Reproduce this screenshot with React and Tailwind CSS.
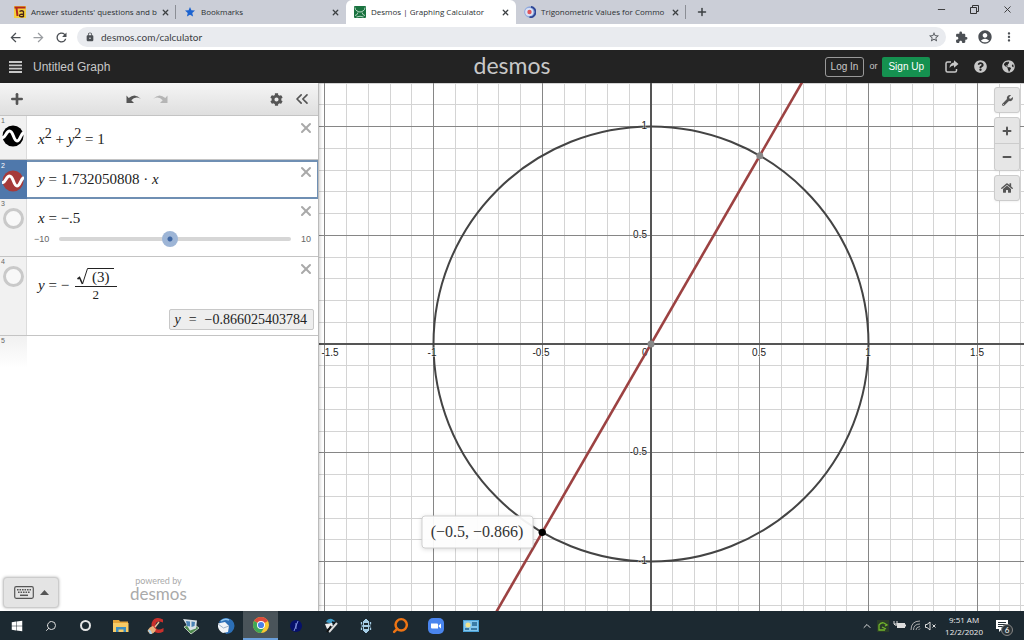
import React, { useState } from 'react';
import { MdAccountCircle, MdArrowBack, MdArrowForward, MdExtension, MdLock, MdMoreVert, MdRefresh, MdStar, MdStarBorder } from 'react-icons/md';
import { FaCog, FaGlobeAmericas, FaHome, FaQuestionCircle, FaWindows, FaWrench } from 'react-icons/fa';
import { ChevronUp, ChevronsLeft, Minus, Plus, Search, X } from 'lucide-react';

/* ─── Browser chrome ─────────────────────────────────────────── */

const TutorIcon = () => (
    <svg viewBox="0 0 12 12" className="size-3">
        <rect width="12" height="12" fill="#f3cf3f" />
        <path d="M.5 1.500h11M2.500 2l1 8" stroke="#b3261e" strokeWidth="2" />
        <path d="M5.500 5.500q2.500-1.500 4 0V10.500q-4 .8-4-1t4-1" fill="none" stroke="#4a2418" strokeWidth="1.300" />
    </svg>
);

const DesmosIcon = () => (
    <svg viewBox="0 0 12 12" className="size-3">
        <rect width="12" height="12" rx="1" fill="#1a7340" />
        <path d="M1 1.500q0 2.500 2 3.500t3 1 3-1 2-3.500M1 9.500q2 0 3-3M8 6.500q1 3 3 3M2.500 11q3.500-1.500 7 0" fill="none" stroke="#d9eee1" strokeWidth=".8" />
    </svg>
);

const TrigIcon = () => (
    <svg viewBox="0 0 12 12" className="size-3">
        <circle cx="6" cy="6" r="5.800" fill="#8fa8dd" />
        <circle cx="5.200" cy="6" r="4" fill="#dbe3f6" />
        <path d="M7 .8a5.200 5.200 0 0 1-1.500 10.400" fill="none" stroke="#2f4796" strokeWidth="1.800" />
        <circle cx="5.500" cy="6" r="2.200" fill="#e0565b" />
    </svg>
);

const TABS = [
    { id: 'answers', title: "Answer students' questions and b", icon: <TutorIcon /> },
    { id: 'bookmarks', title: 'Bookmarks', icon: <MdStar className="size-3 text-[#1a62d0]" /> },
    { id: 'desmos', title: 'Desmos | Graphing Calculator', icon: <DesmosIcon /> },
    { id: 'trig', title: 'Trigonometric Values for Commo', icon: <TrigIcon /> },
];

const TabStrip = () => {
    const [active, setActive] = useState('desmos');
    return (
        <div className="flex h-6 items-stretch bg-[#cbced7] pl-[6px]">
            {TABS.map((tab) => (
                <div
                    key={tab.id}
                    className={`flex w-[170px] items-center pr-[6px] pl-2 ${active === tab.id ? 'rounded-t-md bg-white' : ''} ${tab.id === 'answers' || tab.id === 'trig' ? 'relative after:absolute after:right-0 after:h-[14px] after:w-px after:bg-[#8b8e95]' : ''}`}
                >
                    <button onClick={() => setActive(tab.id)} className="flex min-w-0 flex-1 items-center gap-[5px] text-left">
                        <span className="shrink-0">{tab.icon}</span>
                        <span className="font-['Open_Sans',sans-serif] text-[8px] whitespace-nowrap text-[#2c3033]">{tab.title}</span>
                    </button>
                    <button aria-label={`Close ${tab.title}`} className="shrink-0">
                        <X className="size-[9px] text-[#3c4043]" strokeWidth={3.5} />
                    </button>
                </div>
            ))}
            <button aria-label="New tab" className="ml-[10px]">
                <Plus className="size-3 text-[#3c4043]" strokeWidth={3} />
            </button>
            <div className="ml-auto flex items-start gap-[22px] pt-1 pr-[11px] text-[#333]">
                <button aria-label="Minimize"><Minus className="size-[11px]" /></button>
                <button aria-label="Restore">
                    <svg viewBox="0 0 11 11" className="size-[11px]" fill="none" stroke="currentColor">
                        <path d="M1.500 3.500h6v6h-6zM3.500 3V1.500h6v6H8" />
                    </svg>
                </button>
                <button aria-label="Close"><X className="size-[11px]" /></button>
            </div>
        </div>
    );
};

const AddressBar = () => (
    <div className="flex h-[26px] items-center bg-white pr-2 pl-2 text-[#4b4f54]">
        <div className="flex items-center gap-2">
            <button aria-label="Back"><MdArrowBack className="size-[15px]" /></button>
            <button aria-label="Forward"><MdArrowForward className="size-[15px] text-[#9a9da1]" /></button>
            <button aria-label="Reload"><MdRefresh className="size-[15px]" /></button>
        </div>
        <div className="ml-2 flex h-5 flex-1 items-center rounded-full bg-[#e9ebef] pr-[6px] pl-2">
            <MdLock className="size-[10px]" />
            <input
                aria-label="Address"
                defaultValue="desmos.com/calculator"
                className="ml-[6px] flex-1 bg-transparent text-[10px] text-[#3c4043] outline-none"
            />
            <button aria-label="Bookmark this page"><MdStarBorder className="size-3" /></button>
        </div>
        <div className="ml-[9px] flex items-center gap-[9px]">
            <button aria-label="Extensions"><MdExtension className="size-[13px]" /></button>
            <button aria-label="Profile"><MdAccountCircle className="size-4" /></button>
            <button aria-label="Menu"><MdMoreVert className="size-[14px]" /></button>
        </div>
    </div>
);

/* ─── Desmos header ──────────────────────────────────────────── */

const Header = () => (
    <header className="grid h-[33px] grid-cols-[1fr_auto_1fr] items-center bg-[#232323] px-[9px] font-['Liberation_Sans',sans-serif] text-[#c8c8c8]">
        <div className="flex items-center gap-[11px]">
            <button aria-label="Open menu">
                <svg viewBox="0 0 13 12" className="h-3 w-[13px]" stroke="currentColor" strokeWidth="1.800">
                    <path d="M0 1h13M0 4.300h13M0 7.600h13M0 11h13" />
                </svg>
            </button>
            <button className="text-xs">Untitled Graph</button>
        </div>
        <span className="pb-[3px] font-['Lato',sans-serif] text-[23px] leading-6">desmos</span>
        <div className="flex items-center justify-end text-[10px]">
            <button className="h-5 rounded-[3px] border border-[#999] px-[5px]">Log In</button>
            <span className="mx-[5px] text-[9px]">or</span>
            <button className="h-5 rounded-[2px] bg-[#159150] px-[6px] text-white">Sign Up</button>
            <div className="ml-[15px] flex items-center gap-[15px]">
                <button aria-label="Share graph">
                    <svg viewBox="0 0 14 13" className="h-[13px] w-[14px]" fill="none" stroke="currentColor" strokeWidth="1.500">
                        <path d="M6 2H2.500Q1 2 1 3.500v7Q1 12 2.500 12h7.500q1.500 0 1.500-1.500V9" />
                        <path d="M9 .3 13.500 4 9 7.700V5.500Q6 5.200 4.500 8 4.700 3 9 2.500z" fill="currentColor" stroke="none" />
                    </svg>
                </button>
                <button aria-label="Help"><FaQuestionCircle className="size-[13px]" /></button>
                <button aria-label="Language"><FaGlobeAmericas className="size-[13px]" /></button>
            </div>
        </div>
    </header>
);

/* ─── Expression list ────────────────────────────────────────── */

const CurveIcon = ({ color }) => (
    <svg viewBox="0 0 22 22" className="size-[22px]">
        <circle cx="11" cy="11" r="10.500" fill={color} />
        <path d="M1 12.500C3.500 12 4.500 6 7.500 6c4 0 4 10 7.500 10 3 0 3.500-6 6-8" fill="none" stroke="#fff" strokeWidth="3" strokeLinecap="round" />
    </svg>
);

const EmptyIcon = () => <span className="block size-[21px] rounded-full border-[3px] border-[#c9c9c9] bg-[#f8f8f8]" />;

const ExpressionRow = ({ index, icon, selected, className, children }) => (
    <li className={`relative flex ${selected ? '' : 'border-b border-[#c4c4c4]'} ${className}`}>
        <div className={`flex w-[27px] shrink-0 flex-col border-r ${selected ? 'border-[#4f78ab] bg-[#4f78ab] pt-px text-white' : 'border-[#dcdcdc] bg-[#f1f1f1] text-[#666]'}`}>
            <span className="pl-px font-['Liberation_Sans',sans-serif] text-[7px] leading-[9px]">{index}</span>
            <button aria-label={`Toggle expression ${index}`} className="mx-auto">{icon}</button>
        </div>
        <div className={`relative flex-1 ${selected ? 'border-y-2 border-r border-[#6f8fb3]' : ''}`}>{children}</div>
        <button aria-label={`Delete expression ${index}`} className="absolute top-1 right-1">
            <X className="size-4 text-[#a9a9a9]" strokeWidth={3} />
        </button>
    </li>
);

const Sup = ({ children }) => <sup className="-top-[6px] text-sm leading-none">{children}</sup>;

const ExpressionList = () => {
    const [x, setX] = useState(-0.5);
    return (
        <ol className="font-['Liberation_Serif',serif] text-[15px] text-[#222]">
            <ExpressionRow index={1} className="h-11" icon={<CurveIcon color="#000" />}>
                <div className="pt-3 pl-[11px]">
                    <i>x</i><Sup>2</Sup> + <i>y</i><Sup>2</Sup> = 1
                </div>
            </ExpressionRow>
            <ExpressionRow index={2} selected className="h-[39px]" icon={<CurveIcon color="#a63a3a" />}>
                <div className="pt-[6px] pl-[11px]">
                    <i>y</i> = 1.732050808 · <i>x</i>
                </div>
            </ExpressionRow>
            <ExpressionRow index={3} className="h-[58px]" icon={<EmptyIcon />}>
                <div className="pt-2 pl-[11px]">
                    <i>x</i> = −.5
                </div>
                <label className="flex items-center px-[7px] pt-[3px] font-['Liberation_Sans',sans-serif] text-[9px] text-[#666]">
                    <span className="w-[25px]">−10</span>
                    <input
                        type="range"
                        aria-label="x"
                        min="-10"
                        max="10"
                        step="0.1"
                        value={x}
                        onChange={(e) => setX(Number(e.target.value))}
                        className="h-1 min-w-0 flex-1 appearance-none rounded-full bg-[#d6d6d6] [&::-webkit-slider-thumb]:size-4 [&::-webkit-slider-thumb]:appearance-none [&::-webkit-slider-thumb]:rounded-full [&::-webkit-slider-thumb]:bg-[radial-gradient(circle,#3f67a3_2px,#9db5d6_3px)]"
                    />
                    <span className="w-5 text-right">10</span>
                </label>
            </ExpressionRow>
            <ExpressionRow index={4} className="h-[79px]" icon={<EmptyIcon />}>
                <div className="flex items-center gap-[6px] pt-[11px] pl-[11px]">
                    <span><i>y</i> = −</span>
                    <span className="flex flex-col items-center text-[13px] leading-4">
                        <span className="flex items-stretch border-b border-[#222] pr-[3px] pb-px pl-[2px]">
                            <svg viewBox="0 0 11 17" className="h-[17px] w-[11px]" fill="none" stroke="#222">
                                <path d="M.5 11 2.500 9.500l3 6.500" strokeWidth="1.600" />
                                <path d="M5.500 16 10.500.5h1" />
                            </svg>
                            <span className="border-t border-[#222] px-1 text-[15px] leading-4">(3)</span>
                        </span>
                        <span>2</span>
                    </span>
                </div>
                <output className="absolute right-1 bottom-[5px] flex h-[21px] items-center gap-2 rounded-[2px] border border-[#c8c8c8] bg-[#eee] pr-[6px] pl-1 text-sm">
                    <i>y</i><span>=</span><span>−0.866025403784</span>
                </output>
            </ExpressionRow>
            <li className="flex h-8">
                <div className="w-[27px] bg-linear-to-b from-[#f1f1f1] to-white pl-px font-['Liberation_Sans',sans-serif] text-[7px] text-[#666]">5</div>
            </li>
        </ol>
    );
};

const Sidebar = () => (
    <aside className="z-10 flex w-[319px] shrink-0 flex-col border-r border-[#bbb] bg-white shadow-[1px_0_3px_rgba(0,0,0,0.2)]">
        <div className="flex h-[33px] items-center border-b border-[#c4c4c4] bg-linear-to-b from-[#f5f5f5] to-[#dfdfdf] pr-[6px] pl-[9px] text-[#555]">
            <button aria-label="Add item"><Plus className="size-4" strokeWidth={4} /></button>
            <div className="ml-[101px] flex gap-3">
                <button aria-label="Undo">
                    <svg viewBox="0 0 15 11" className="h-[11px] w-[15px]" fill="currentColor">
                        <path d="M.5 1.500 2.700 4Q9-1.500 15 5 9.500 1.500 5.300 6.200L8 9H.5z" />
                    </svg>
                </button>
                <button aria-label="Redo" className="text-[#b5b5b5]">
                    <svg viewBox="0 0 15 11" className="h-[11px] w-[15px]" fill="currentColor">
                        <path d="M14.500 1.500 12.300 4Q6-1.500 0 5 5.500 1.500 9.700 6.200L7 9h7.500z" />
                    </svg>
                </button>
            </div>
            <button aria-label="Edit list" className="ml-auto"><FaCog className="size-[13px]" /></button>
            <button aria-label="Hide list" className="ml-[9px]"><ChevronsLeft className="size-5" /></button>
        </div>
        <ExpressionList />
        <div className="mt-auto flex items-end pb-[3px] pl-[3px]">
            <button aria-label="Show keypad" className="flex h-[31px] w-14 items-center justify-center gap-[6px] rounded-[4px] border border-[#ccc] bg-[#e4e4e4] text-[#555] shadow-[0_0_3px_rgba(0,0,0,0.3)]">
                <svg viewBox="0 0 20 13" className="h-[13px] w-5" fill="none" stroke="currentColor">
                    <rect x=".7" y=".7" width="18.600" height="11.600" rx="1.500" strokeWidth="1.200" />
                    <path d="M3 3.800h14M4 6.300h12" strokeWidth="1.500" strokeDasharray="1.600 .9" />
                    <path d="M6 9.300h8" strokeWidth="1.500" />
                </svg>
                <svg viewBox="0 0 9 5" className="h-[5px] w-[9px]" fill="currentColor"><path d="M0 5 4.500 0 9 5z" /></svg>
            </button>
            <a href="#desmos" className="ml-[71px] flex flex-col items-center pb-[6px] text-[#aaa]">
                <span className="text-[9px] leading-[9px]">powered by</span>
                <span className="text-[17px] leading-[17px]">desmos</span>
            </a>
        </div>
    </aside>
);

/* ─── Graph paper ────────────────────────────────────────────── */

const ORIGIN = { x: 332, y: 261 };
const UNIT = 217.5;
const px = (v) => Math.floor(ORIGIN.x + v * UNIT);
const py = (v) => Math.floor(ORIGIN.y - v * UNIT);
const STEPS = Array.from({ length: 41 }, (_, i) => i - 20);
const X_LABELS = [-1.5, -1, -0.5, 0.5, 1, 1.5];
const Y_LABELS = [1, 0.5, -0.5, -1];

const gridColor = (i) => (i % 5 === 0 ? '#868686' : '#d4d4d4');

const GraphPaper = () => (
    <main className="relative min-w-0 flex-1 overflow-hidden bg-white">
        <svg viewBox="0 0 705 528" preserveAspectRatio="xMidYMid slice" className="absolute inset-0 size-full">
            {[...STEPS].sort((a, b) => (a % 5 === 0) - (b % 5 === 0)).map((i) => (
                <g key={i} stroke={gridColor(i)}>
                    <line x1={px(i / 10) + 0.5} x2={px(i / 10) + 0.5} y1="0" y2="528" />
                    <line x1="0" x2="705" y1={py(i / 10) + 0.5} y2={py(i / 10) + 0.5} />
                </g>
            ))}
            <path d={`M0 ${ORIGIN.y}H705M${ORIGIN.x} 0V528`} stroke="#555" strokeWidth="2" />
            <circle cx={ORIGIN.x} cy={ORIGIN.y} r={UNIT} fill="none" stroke="#444" strokeWidth="2" />
            <g fontFamily="Liberation Sans, sans-serif" fontSize="10" fill="#222" stroke="#fff" strokeWidth="1" strokeOpacity=".7" paintOrder="stroke">
                {X_LABELS.map((v) => (
                    <text key={v} x={Math.max(px(v) - (v < 0 ? 1 : 0), 11)} y={ORIGIN.y + 12} textAnchor="middle">{v}</text>
                ))}
                <text x={ORIGIN.x - 9} y={ORIGIN.y + 12}>0</text>
                {Y_LABELS.map((v) => (
                    <text key={v} x={ORIGIN.x - 4} y={py(v) + 3} textAnchor="end">{v}</text>
                ))}
            </g>
            <line
                x1={ORIGIN.x - 1.3 * UNIT}
                y1={ORIGIN.y + 1.3 * Math.sqrt(3) * UNIT}
                x2={ORIGIN.x + 1.3 * UNIT}
                y2={ORIGIN.y - 1.3 * Math.sqrt(3) * UNIT}
                stroke="#9c4242"
                strokeWidth="2.6"
            />
            <circle cx={ORIGIN.x} cy={ORIGIN.y} r="3.5" fill="#888" />
            <circle cx={ORIGIN.x + 0.5 * UNIT} cy={ORIGIN.y - 0.866 * UNIT} r="3.5" fill="#888" />
            <rect x="103" y="433" width="111" height="32" rx="3" fill="#fff" fillOpacity=".93" stroke="#d0d0d0" className="drop-shadow-sm" />
            <text x="158" y="454" textAnchor="middle" fontFamily="Liberation Serif, serif" fontSize="16" fill="#333">(−0.5, −0.866)</text>
            <circle cx={ORIGIN.x - 0.5 * UNIT} cy={ORIGIN.y + 0.866 * UNIT} r="3.7" fill="#000" />
        </svg>
        <div className="absolute top-1 right-1 flex w-[26px] flex-col gap-1 text-[#555]">
            <button aria-label="Graph settings" className="flex h-[26px] items-center justify-center rounded-[3px] border border-[#ccc] bg-[#e6e6e6] shadow-xs">
                <FaWrench className="size-[11px]" />
            </button>
            <div className="flex flex-col divide-y divide-[#ccc] rounded-[3px] border border-[#ccc] bg-[#e6e6e6] shadow-xs">
                <button aria-label="Zoom in" className="flex h-[26px] items-center justify-center"><Plus className="size-3" strokeWidth={4} /></button>
                <button aria-label="Zoom out" className="flex h-[26px] items-center justify-center"><Minus className="size-3" strokeWidth={4} /></button>
            </div>
            <button aria-label="Default viewport" className="flex h-[26px] items-center justify-center rounded-[3px] border border-[#ccc] bg-[#e6e6e6] shadow-xs">
                <FaHome className="size-3" />
            </button>
        </div>
    </main>
);

/* ─── Windows taskbar ────────────────────────────────────────── */

const SYSTEM = [
    { name: 'Start', icon: <FaWindows className="size-3 text-white" /> },
    { name: 'Search', icon: <Search className="size-3 -scale-x-100 text-[#ddd]" /> },
    { name: 'Cortana', icon: <span className="block size-[11px] rounded-full border-2 border-[#e5e5e5]" /> },
];

const APPS = [
    {
        name: 'File Explorer',
        icon: (
            <svg viewBox="0 0 16 16" className="size-4">
                <path d="M0 2h6l1 1.500h8V14H0z" fill="#e5a53a" />
                <path d="M0 5h15.500v9H0z" fill="#f7cb66" />
                <path d="M3 14V9h10v5h-2.500v-2.500h-5V14z" fill="#3e8fc0" />
            </svg>
        ),
    },
    {
        name: 'CCleaner',
        icon: (
            <svg viewBox="0 0 18 18" className="size-[18px]">
                <path d="M16 5.500V2.500Q13 .5 10 1 4.500 2 4.500 8.500T11 16q3 0 5.500-1.500v-3.500Q13 13 11 12.500 8.500 12 8.500 8.500T11.500 4.500q2 0 4.500 1z" fill="#c9302c" />
                <path d="m12 5-4 5" stroke="#e8c39b" strokeWidth="1.500" />
                <path d="M6 9Q2 10 .5 14l2.500 3q4 0 6-4.500z" fill="#e8b27c" />
                <path d="M1 13q3-1 4 4H3z" fill="#a5d2ee" />
            </svg>
        ),
    },
    {
        name: 'Drive Manager',
        icon: (
            <svg viewBox="0 0 18 18" className="size-[18px]">
                <path d="m2 10 7 7 8-6-7-5z" fill="#4e8a4e" stroke="#b8c8b8" />
                <path d="m1 2 14 1.500-1 8-6 2z" fill="#d9e1e6" />
                <path d="m4 4 4 .5v5L5 9zM9.500 4.500l3.500.5-.5 4-3 1z" fill="#4a82b4" />
            </svg>
        ),
    },
    {
        name: 'Thunderbird',
        icon: (
            <svg viewBox="0 0 18 18" className="size-[18px]">
                <path d="M2 5Q5 .5 10 1q7 1 7.500 8-.5 7-8.500 8z" fill="#2c6fb7" />
                <path d="M1 6.500 8 5l4 4-1 6-5 1q-4-2-5-6z" fill="#f1f4f8" />
                <path d="m1 7 5.500 4L12 9" fill="none" stroke="#9fb3c8" />
                <path d="M4 4q4-3 8-1" fill="none" stroke="#8fc4ee" strokeWidth="1.500" />
            </svg>
        ),
    },
    {
        name: 'Chrome',
        open: true,
        icon: (
            <svg viewBox="0 0 16 16" className="size-4">
                <circle cx="8" cy="8" r="8" fill="#f9c831" />
                <path d="M8 8 1.100 4A8 8 0 0 1 14.900 4z" fill="#dd4b3e" />
                <path d="M8 8 1.100 4A8 8 0 0 0 8 16l3.500-6z" fill="#3fa757" />
                <circle cx="8" cy="8" r="4" fill="#fff" />
                <circle cx="8" cy="8" r="3.100" fill="#4a80e8" />
            </svg>
        ),
    },
    {
        name: 'Compass',
        icon: (
            <svg viewBox="0 0 14 14" className="size-[14px]">
                <circle cx="7" cy="7" r="6" fill="#06106b" />
                <path d="M9 2 5 12M7 4v6" stroke="#8c9de8" strokeWidth=".9" />
            </svg>
        ),
    },
    {
        name: 'Pen Tool',
        icon: (
            <svg viewBox="0 0 16 16" className="size-4">
                <path d="M3 4q2-4 6-3l3 2-3 3z" fill="#3e9cc8" />
                <path d="m2 6 7-1 1 3-6 3z" fill="#eee" />
                <path d="m14 5-8 9" stroke="#ddd" strokeWidth="2" />
                <path d="m8 8-4 6M9 4l3 1" stroke="#111" strokeWidth="1.800" />
            </svg>
        ),
    },
    {
        name: 'Sync',
        icon: (
            <svg viewBox="0 0 14 14" className="size-[14px]" fill="none" stroke="#a5cde6">
                <path d="M7 0 4 3h6zM7 14l-3-3h6z" fill="#a5cde6" />
                <rect x="4.500" y="3.500" width="5" height="3" />
                <rect x="4.500" y="7.500" width="5" height="3" />
                <path d="M2.500 3v2.500M11.500 3v2.500M2.500 8.500V11M11.500 8.500V11M2.500 7h9" strokeWidth="1.300" />
            </svg>
        ),
    },
    { name: 'Everything', icon: <Search className="size-[17px] -scale-x-100 text-[#ed7414]" strokeWidth={3.5} /> },
    {
        name: 'Zoom',
        icon: (
            <svg viewBox="0 0 16 16" className="size-4">
                <rect width="16" height="16" rx="5" fill="#4a85ee" />
                <path d="M3 5.500h6q1 0 1 1v4H4q-1 0-1-1zM10.700 7.500 13 5.500v5l-2.300-2z" fill="#fff" />
            </svg>
        ),
    },
    {
        name: 'Control Panel',
        icon: (
            <svg viewBox="0 0 16 12" className="h-3 w-4">
                <rect width="16" height="12" fill="#4ba3d8" />
                <rect x="1" y="1" width="14" height="10" fill="#83c6ee" />
                <circle cx="5" cy="5" r="2.500" fill="#f2e38c" />
                <path d="M9 3h5M9 5h5M2 9h4M8 9h6" stroke="#23638f" strokeWidth="1.300" />
            </svg>
        ),
    },
];

const Taskbar = () => (
    <footer className="flex h-[29px] bg-[#1c2931]">
        {SYSTEM.map((item) => (
            <button key={item.name} aria-label={item.name} className="flex w-[34px] items-center justify-center">{item.icon}</button>
        ))}
        <div className="flex pl-px">
            {APPS.map((app) => (
                <button
                    key={app.name}
                    aria-label={app.name}
                    className={`flex w-[35px] items-center justify-center ${app.open ? 'border-b-2 border-[#6a9fdb] bg-[#4a545a]' : ''}`}
                >
                    {app.icon}
                </button>
            ))}
        </div>
        <div className="ml-auto flex items-center gap-1 pr-[15px] text-[#ddd]">
            <ChevronUp className="size-3" />
            <svg viewBox="0 0 12 12" className="size-3">
                <rect width="12" height="12" fill="#293c28" />
                <path d="M2 5q2-3 5-2l3 2-2 1M4 3l-2 2v5h6M5 7l4 2" fill="none" stroke="#72b72b" strokeWidth="1.300" />
            </svg>
            <svg viewBox="0 0 13 11" className="h-[11px] w-[13px]">
                <path d="M4 3h8v5H4z" fill="#ddd" />
                <path d="M1 1v3q1 2 3 1M1 4h3V1" fill="none" stroke="#ddd" />
                <path d="M12.500 4.500v2" stroke="#ddd" />
            </svg>
            <svg viewBox="0 0 11 11" className="size-[11px]" fill="none" stroke="#aaa">
                <path d="M1 10Q1 1 10 1M3.500 10q0-6 6.500-6M6 10q0-3 4-3.500M8.500 10 10 8.500" />
            </svg>
            <svg viewBox="0 0 12 10" className="h-[10px] w-3" fill="none" stroke="#ddd">
                <path d="M.5 3.500H2L5 1v8L2 6.500H.5zM7.500 3.500l3 3M10.500 3.500l-3 3" />
            </svg>
            <div className="flex flex-col items-center pl-1 font-['Open_Sans',sans-serif] text-[8px] leading-3 text-[#eee]">
                <span>9:51 AM</span>
                <span>12/2/2020</span>
            </div>
            <button aria-label="6 notifications" className="relative ml-2 flex size-[14px]">
                <svg viewBox="0 0 14 14" className="size-[14px]">
                    <path d="M1 1h12v9H7l-3 3v-3H1z" fill="#fff" />
                    <path d="M3 3.500h8M3 5.500h8M3 7.500h5" stroke="#26333a" />
                </svg>
                <span className="absolute top-[5px] left-[6px] flex size-3 items-center justify-center rounded-full border border-[#888] bg-[#2c3438] text-[8px] text-white">6</span>
            </button>
        </div>
    </footer>
);

const App = () => (
    <div className="flex h-screen flex-col overflow-hidden bg-white font-['Lato',sans-serif]">
        <TabStrip />
        <AddressBar />
        <Header />
        <div className="flex min-h-0 flex-1">
            <Sidebar />
            <GraphPaper />
        </div>
        <Taskbar />
    </div>
);

export default App;
